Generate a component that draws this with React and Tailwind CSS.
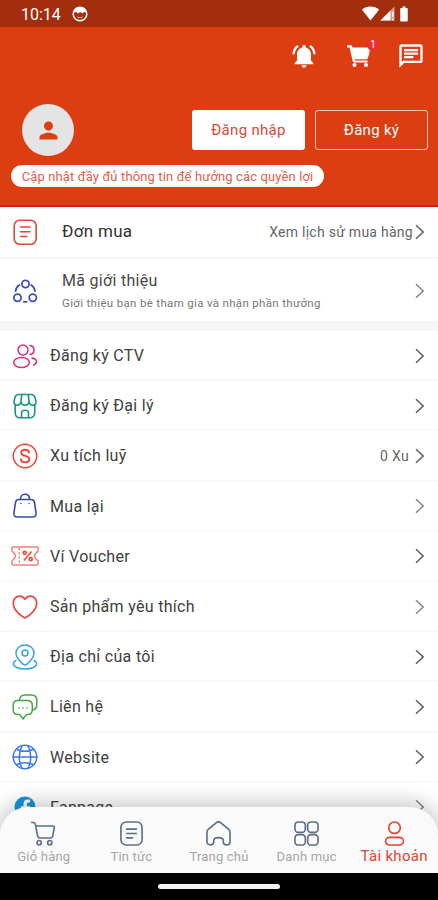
import React from 'react';
import {
  MdBatteryFull,
  MdNotificationsActive,
  MdOutlineChat,
  MdPerson,
} from 'react-icons/md';

const Icon = ({ size = 26, color, width = 1.5, children }) => (
  <svg
    width={size}
    height={size}
    viewBox="0 0 26 26"
    fill="none"
    stroke={color || 'currentColor'}
    strokeWidth={width}
    strokeLinecap="round"
    strokeLinejoin="round"
    className="shrink-0"
  >
    {children}
  </svg>
);

const Chevron = ({ dark }) => (
  <svg
    width="10"
    height="16"
    viewBox="0 0 10 16"
    fill="none"
    stroke={dark ? '#5c5c5c' : '#858585'}
    strokeWidth="1.5"
    className="shrink-0"
  >
    <path d="M1 1.2 8.2 8 1 14.8" />
  </svg>
);

const HeaderCart = () => (
  <svg width="26" height="26" viewBox="0 0 26 26" fill="#fff">
    <path d="M1 2.200h3.800c.6 0 1 .3 1.200.8l.5 1.500h16.800c.8 0 1.200.6 1 1.300l-2.400 9.400c-.2.700-.7 1.100-1.400 1.100H8.600l.3 1.300h12.600v2H8.200c-.7 0-1.200-.4-1.400-1L3.600 4.400H1Z" />
    <circle cx="8.500" cy="22" r="2" />
    <circle cx="20" cy="22" r="2" />
  </svg>
);

const OrderIcon = () => (
  <Icon color="#e04a38" width={1.6}>
    <rect x="2.2" y="1.2" width="22" height="24" rx="5.5" />
    <path d="M8.5 8h9.5M8.5 12.8H18M8.5 17.5h6.3" />
  </Icon>
);

const ReferralIcon = () => (
  <Icon color="#3f51b5" width={1.8}>
    <circle cx="13.5" cy="6" r="3.6" />
    <circle cx="5.5" cy="19.8" r="3.6" />
    <circle cx="20.8" cy="19.8" r="3.6" />
    <path d="M7.300 7C5 8.500 3.800 10.700 3.600 13.200M19.200 7c2.300 1.500 3.500 3.700 3.800 6.200M11.800 23.800c1 .2 1.900.2 2.900 0" />
  </Icon>
);

const MembersIcon = () => (
  <Icon color="#d62e72">
    <circle cx="11" cy="7" r="5" />
    <ellipse cx="9.5" cy="19.5" rx="7.8" ry="5" />
    <path d="M18 2.500c2.300.3 4 2.200 4 4.500s-1.700 4.200-4 4.500M20 15c2.800.5 4.500 1.700 4.500 3.600 0 1.500-1 2.700-3 3.500" />
  </Icon>
);

const ShopIcon = () => (
  <Icon color="#1c9484" width={1.6}>
    <path d="M3.200 11.500v8.200c0 3.300 1.500 5 5 5h9.500c3.500 0 5-1.700 5-5v-8.200" />
    <path d="M6.500 1.500h13c2 0 3 1 3.500 3l1 4c.4 2.200-1 3.700-3.100 3.700s-3.400-1.200-3.800-3c-.3 1.800-1.800 3-4.100 3s-3.800-1.200-4.100-3c-.4 1.800-1.700 3-3.800 3S1.600 10.700 2 8.500l1-4c.5-2 1.500-3 3.500-3Z" />
    <path d="M9.800 1.500 8.900 9.200M16.200 1.500l.9 7.700M9.500 24.500v-4c0-2 1.300-3.200 3.500-3.200s3.500 1.200 3.500 3.200v4" />
  </Icon>
);

const CoinIcon = () => (
  <Icon color="#eb4638">
    <circle cx="13" cy="13" r="11.7" />
    <path
      strokeWidth="1.9"
      d="M17 9.500c-.2-1.700-1.600-2.700-3.900-2.700-2.400 0-3.900 1.100-3.900 2.900 0 4.300 8.100 2.200 8.100 6.500 0 1.900-1.700 3.100-4.200 3.100s-4-1.100-4.200-3"
    />
  </Icon>
);

const BagIcon = () => (
  <Icon color="#3949ab" width={1.6}>
    <path d="M7 6.500h12c2 0 3.100.8 3.500 2.800l1.500 10.200c.4 3.200-.7 4.500-3.700 4.500H5.700c-3 0-4.100-1.300-3.700-4.500L3.500 9.300C3.900 7.300 5 6.500 7 6.500Z" />
    <path d="M8.500 6c0-2.900 1.800-4.700 4.500-4.700s4.500 1.800 4.500 4.700" />
    <path strokeWidth="1.300" d="M8.800 10.500h.2M17 10.500h.2" />
  </Icon>
);

const VoucherIcon = () => (
  <svg
    width="28"
    height="20"
    viewBox="0 0 28 20"
    fill="none"
    stroke="#f08377"
    strokeWidth="1.5"
    strokeLinejoin="round"
    className="-mx-px shrink-0"
  >
    <path d="M2.200 1h23.600c1 0 1.400.5 1.400 1.400v2.200c0 1.200-3.700 2.500-3.700 5.400s3.700 4.200 3.700 5.400v2.200c0 .9-.4 1.400-1.400 1.400H2.200C1.200 19 .8 18.500.8 17.600v-2.200c0-1.200 3.700-2.500 3.700-5.400S.8 5.800.8 4.600V2.400C.8 1.500 1.200 1 2.200 1Z" />
    <path strokeDasharray="2.2 2" d="M8.300 2v16" />
    <g stroke="#e6503f" strokeWidth="1.700">
      <path d="m13 14.500 7.500-9" />
      <circle cx="13.700" cy="6.800" r="1.500" />
      <circle cx="19.700" cy="13.200" r="1.500" />
    </g>
  </svg>
);

const HeartIcon = () => (
  <Icon color="#e94b42" width={1.7}>
    <path d="M13 24c-1.500-.6-11.700-6.500-11.700-15 0-4 2.800-6.800 6.200-6.800 2.300 0 4.200 1.100 5.500 3.100 1.300-2 3.200-3.100 5.500-3.100 3.400 0 6.200 2.800 6.200 6.800 0 8.500-10.200 14.400-11.700 15Z" />
  </Icon>
);

const PlaceIcon = () => (
  <Icon color="#36a4e4">
    <path d="M13 21c-1.700 0-9-6.500-9-12 0-4.700 4-8 9-8s9 3.300 9 8c0 5.500-7.300 12-9 12Z" />
    <circle cx="13" cy="9" r="3" />
    <path d="M4 16.500c-1.700.9-2.700 2-2.700 3.200C1.300 22.700 6.500 25 13 25s11.700-2.300 11.700-5.300c0-1.200-1-2.300-2.700-3.200" />
  </Icon>
);

const ContactIcon = () => (
  <Icon color="#45a749">
    <path d="M6 6.500h9.500c3.200 0 4.800 1.600 4.800 4.800v4.500c0 3.200-1.600 4.800-4.800 4.800h-1.200L11 25l-3.300-4.400H6c-3.200 0-4.800-1.600-4.800-4.800v-4.500c0-3.200 1.600-4.800 4.800-4.800Z" />
    <path d="M7.500 6.300C7.500 3 9.300 1 12.800 1h6.500c3.600 0 5.500 1.900 5.500 5.500v4.200c0 3.200-1.300 4.800-4.400 5.200" />
    <path strokeWidth="1.6" d="M7 14h.1M11 14h.1M15 14h.1" />
  </Icon>
);

const GlobeIcon = () => (
  <Icon color="#397bea">
    <circle cx="13" cy="13" r="11.8" />
    <path d="M1.200 13h23.600M10 1.700c-3.400 7-3.400 15.600 0 22.600M16 1.700c3.400 7 3.400 15.600 0 22.600M4.300 5.200c5.500 2.500 11.900 2.500 17.400 0M4.300 20.800c5.500-2.500 11.900-2.500 17.400 0" />
  </Icon>
);

const FacebookIcon = () => (
  <svg width="26" height="26" viewBox="0 0 26 26" className="shrink-0">
    <circle cx="13" cy="13" r="10.5" fill="#1696dc" />
    <path
      fill="#fff"
      d="M11.500 23.400v-8H8.700v-3.100h2.800v-2.400c0-2.800 1.700-4.300 4.200-4.300 1.200 0 2.400.2 2.400.2v2.700h-1.400c-1.400 0-1.800.9-1.800 1.700v2.100H18l-.5 3.100h-2.600v8Z"
    />
  </svg>
);

const menu = [
  { label: 'Đăng ký CTV', icon: MembersIcon, dark: true },
  { label: 'Đăng ký Đại lý', icon: ShopIcon, dark: true },
  { label: 'Xu tích luỹ', icon: CoinIcon, value: '0 Xu', dark: true },
  { label: 'Mua lại', icon: BagIcon },
  { label: 'Ví Voucher', icon: VoucherIcon, dark: true },
  { label: 'Sản phẩm yêu thích', icon: HeartIcon },
  { label: 'Địa chỉ của tôi', icon: PlaceIcon, dark: true },
  { label: 'Liên hệ', icon: ContactIcon, dark: true },
  { label: 'Website', icon: GlobeIcon, dark: true },
  { label: 'Fanpage', icon: FacebookIcon },
];

const MenuRow = ({ item }) => {
  const RowIcon = item.icon;
  return (
    <div className="flex h-[50.2px] shrink-0 items-center border-b-2 border-[#f8f8f8] pt-px pr-[13px] pl-3">
      <RowIcon />
      <span className="ml-3 grow pt-px text-base tracking-[0.3px]">{item.label}</span>
      {item.value && (
        <span className="mr-[6px] pt-px text-sm tracking-[0.3px] text-[#666]">{item.value}</span>
      )}
      <Chevron dark={item.dark} />
    </div>
  );
};

const StatusBar = () => (
  <div className="flex h-[27px] shrink-0 items-center bg-[#a32e0d] pr-[29px] pl-[21px] text-white">
    <span className="pt-0.5 text-base">10:14</span>
    <svg width="16" height="16" viewBox="0 0 16 16" className="ml-[11px]">
      <circle cx="8" cy="8" r="6.8" fill="none" stroke="#fff" strokeWidth="1.5" />
      <path fill="#fff" d="M1.500 6.500C2 3 4.500 1 8 1s6 2 6.500 5.500L12 6l-1.500 1.500L8.300 6 6 7.500 4.300 6Z" />
      <path fill="none" stroke="#fff" strokeOpacity=".7" d="M5.300 10.800c1.500 1.300 3.900 1.300 5.400 0" />
    </svg>
    <div className="ml-auto flex items-center">
      <svg width="17" height="15" viewBox="0 0 17 15" fill="#fff">
        <path d="M0 3.800C2.300 1.700 5.200.6 8.500.6s6.200 1.100 8.500 3.200L8.500 14.500Z" />
      </svg>
      <svg width="15" height="15" viewBox="0 0 15 15" fill="#fff" className="ml-px">
        <path fillOpacity=".55" d="M14.500.5v14H.5Z" />
        <path d="M10.300 4.700v9.800H.5Z" />
        <path d="M12 6h1.700v5H12ZM12 12.500h1.700v2H12Z" />
      </svg>
      <MdBatteryFull size={18} className="-mr-1" />
    </div>
  </div>
);

const Header = () => (
  <header className="flex h-[179.5px] shrink-0 flex-col border-b-2 border-[#d81b17] bg-[#dc3e12]">
    <div className="flex h-[58px] items-center justify-end pr-[13px] text-white">
      <MdNotificationsActive size={28} />
      <div className="relative ml-[28px]">
        <HeaderCart />
        <span className="absolute -top-[4px] left-[21px] flex size-3 items-center justify-center rounded-full bg-[#ec2f32] text-[10px] leading-none">
          1
        </span>
      </div>
      <MdOutlineChat size={28} className="ml-[25px]" />
    </div>
    <div className="flex items-center pt-[19px] pr-[10px] pl-[22px]">
      <div className="flex size-[52px] items-center justify-center rounded-full bg-[#e4e4e4] text-[#dc3e12]">
        <MdPerson size={27} />
      </div>
      <button className="ml-auto h-10 w-[113px] rounded-[3px] bg-white text-[15px] tracking-[0.3px] text-[#dc4938]">
        Đăng nhập
      </button>
      <button className="ml-[10px] h-10 w-[113px] rounded-[3px] border-[1.5px] border-[#ffcabd] text-[15px] tracking-[0.3px] text-white">
        Đăng ký
      </button>
    </div>
    <div className="mt-[9px] ml-[11px] flex h-[22px] w-[313px] items-center justify-center rounded-full bg-white pt-px text-[13px] tracking-[0.13px] whitespace-nowrap text-[#e85c4b]">
      Cập nhật đầy đủ thông tin để hưởng các quyền lợi
    </div>
  </header>
);

const tabs = [
  {
    label: 'Giỏ hàng',
    art: (
      <>
        <path d="M.8 1.500h1.500c1.200 0 1.900.6 2.200 1.800l2.400 12.500c.2 1.300 1 1.900 2.300 1.900h11c1.300 0 2-.6 2.300-1.900l1.700-8.400c.3-1.500-.3-2.200-1.700-2.200H5" />
        <circle cx="8.5" cy="22.5" r="2.2" />
        <circle cx="19.5" cy="22.5" r="2.2" />
      </>
    ),
  },
  {
    label: 'Tin tức',
    art: (
      <>
        <rect x="2" y="1" width="22" height="24" rx="5.5" />
        <path d="M8 8.500h10M8 13h10M8 17.500h6" />
      </>
    ),
  },
  {
    label: 'Trang chủ',
    art: (
      <path d="M1 11.700c0-1.400.5-2.300 1.600-3.200l8.300-6.900c1.400-1.100 2.800-1.100 4.200 0l8.300 6.900c1.100.9 1.600 1.800 1.600 3.200V21c0 2.700-1.200 3.900-3.600 3.900-2.400 0-3.400-1-3.400-3.100v-1.500c0-1.900-1.500-3-5-3s-5 1.100-5 3v1.500c0 2.100-1 3.100-3.400 3.100C2.200 24.900 1 23.700 1 21Z" />
    ),
  },
  {
    label: 'Danh mục',
    art: (
      <>
        <rect x="1" y="1" width="10.8" height="10.8" rx="3.5" />
        <rect x="14.2" y="1" width="10.8" height="10.8" rx="3.5" />
        <rect x="1" y="14.2" width="10.8" height="10.8" rx="3.5" />
        <rect x="14.2" y="14.2" width="10.8" height="10.8" rx="3.5" />
      </>
    ),
  },
  {
    label: 'Tài khoản',
    active: true,
    art: (
      <>
        <circle cx="13" cy="7" r="6" />
        <rect x="3.7" y="17" width="18.600" height="8" rx="4" />
      </>
    ),
  },
];

const TabBar = () => (
  <nav className="absolute inset-x-0 bottom-0 grid h-[66px] grid-cols-5 rounded-t-[28px] bg-[#fafafa] shadow-[0_-2px_20px_4px_rgba(0,0,0,0.2)]">
    {tabs.map((tab) => (
      <div
        key={tab.label}
        className={`flex flex-col items-center pt-[14px] whitespace-nowrap ${
          tab.active ? 'text-[#e04330]' : 'text-[#5d6d88]'
        }`}
      >
        <Icon size={25} width={1.7}>
          {tab.art}
        </Icon>
        <span
          className={
            tab.active
              ? 'mt-px text-[15px] leading-[18px] tracking-[0.3px]'
              : 'mt-[3px] text-[13px] leading-4 tracking-[0.2px] text-[#a5a5a5]'
          }
        >
          {tab.label}
        </span>
      </div>
    ))}
  </nav>
);

export default function App() {
  return (
    <div className="flex h-[900px] w-[438px] flex-col overflow-hidden bg-black font-[Roboto,sans-serif] text-[#404040]">
      <div className="relative flex h-[873px] shrink-0 flex-col overflow-hidden bg-white">
        <StatusBar />
        <Header />
        <div className="flex h-[52.5px] shrink-0 items-center border-b-2 border-[#f5f5f5] pr-[13px] pl-3">
          <OrderIcon />
          <span className="ml-6 grow text-[17px] tracking-[0.3px] text-[#303030]">Đơn mua</span>
          <span className="mr-[2px] text-sm tracking-[0.27px] text-[#666]">
            Xem lịch sử mua hàng
          </span>
          <Chevron dark />
        </div>
        <div className="flex h-[62px] shrink-0 items-center pt-px pr-[13px] pl-3">
          <ReferralIcon />
          <div className="ml-6 grow">
            <p className="text-base leading-6 tracking-[0.3px] text-[#484848]">Mã giới thiệu</p>
            <p className="mt-px text-[11.5px] leading-[18px] tracking-[0.33px] text-[#777]">
              Giới thiệu bạn bè tham gia và nhận phần thưởng
            </p>
          </div>
          <Chevron />
        </div>
        <div className="h-[10px] shrink-0 bg-[#f5f5f5]" />
        {menu.map((item) => (
          <MenuRow key={item.label} item={item} />
        ))}
        <TabBar />
      </div>
      <div className="flex grow items-center justify-center">
        <div className="h-[5px] w-[122px] rounded-full bg-[#f1f1f1]" />
      </div>
    </div>
  );
}
